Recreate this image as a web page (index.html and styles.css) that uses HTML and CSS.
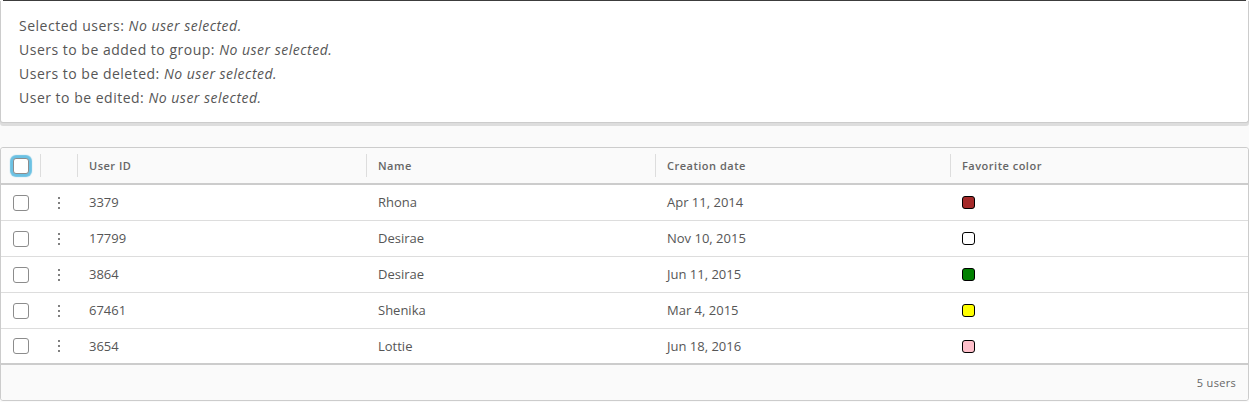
FILE: index.html
```html
<!DOCTYPE html>
<html>
<head>
<meta charset="utf-8">
<link rel="stylesheet" href="styles.css">
</head>
<body>
<div class="topline"></div>
<div class="card">
  <div class="line">Selected users: <em>No user selected.</em></div>
  <div class="line">Users to be added to group: <em>No user selected.</em></div>
  <div class="line">Users to be deleted: <em>No user selected.</em></div>
  <div class="line">User to be edited: <em>No user selected.</em></div>
</div>

<div class="grid">
  <div class="row head">
    <div class="cell c-check"><span class="cb focus"></span></div>
    <div class="cell c-act"><span class="sep"></span></div>
    <div class="cell c-id"><span class="sep"></span>User ID</div>
    <div class="cell c-name"><span class="sep"></span>Name</div>
    <div class="cell c-date"><span class="sep"></span>Creation date</div>
    <div class="cell c-color"><span class="sep"></span>Favorite color</div>
  </div>
  <div class="row">
    <div class="cell c-check"><span class="cb"></span></div>
    <div class="cell c-act"><span class="dots"><i></i><i></i><i></i></span></div>
    <div class="cell c-id"><span class="txt">3379</span></div>
    <div class="cell c-name"><span class="txt">Rhona</span></div>
    <div class="cell c-date"><span class="txt">Apr 11, 2014</span></div>
    <div class="cell c-color"><span class="sw brown"></span></div>
  </div>
  <div class="row">
    <div class="cell c-check"><span class="cb"></span></div>
    <div class="cell c-act"><span class="dots"><i></i><i></i><i></i></span></div>
    <div class="cell c-id"><span class="txt">17799</span></div>
    <div class="cell c-name"><span class="txt">Desirae</span></div>
    <div class="cell c-date"><span class="txt">Nov 10, 2015</span></div>
    <div class="cell c-color"><span class="sw white"></span></div>
  </div>
  <div class="row">
    <div class="cell c-check"><span class="cb"></span></div>
    <div class="cell c-act"><span class="dots"><i></i><i></i><i></i></span></div>
    <div class="cell c-id"><span class="txt">3864</span></div>
    <div class="cell c-name"><span class="txt">Desirae</span></div>
    <div class="cell c-date"><span class="txt">Jun 11, 2015</span></div>
    <div class="cell c-color"><span class="sw green"></span></div>
  </div>
  <div class="row">
    <div class="cell c-check"><span class="cb"></span></div>
    <div class="cell c-act"><span class="dots"><i></i><i></i><i></i></span></div>
    <div class="cell c-id"><span class="txt">67461</span></div>
    <div class="cell c-name"><span class="txt">Shenika</span></div>
    <div class="cell c-date"><span class="txt">Mar 4, 2015</span></div>
    <div class="cell c-color"><span class="sw yellow"></span></div>
  </div>
  <div class="row last">
    <div class="cell c-check"><span class="cb"></span></div>
    <div class="cell c-act"><span class="dots"><i></i><i></i><i></i></span></div>
    <div class="cell c-id"><span class="txt">3654</span></div>
    <div class="cell c-name"><span class="txt">Lottie</span></div>
    <div class="cell c-date"><span class="txt">Jun 18, 2016</span></div>
    <div class="cell c-color"><span class="sw pink"></span></div>
  </div>
  <div class="footer">5 users</div>
</div>
</body>
</html>
```

FILE: styles.css
```css
html, body {
  margin: 0;
  padding: 0;
  background: #fafafa;
  font-family: "Open Sans", "Liberation Sans", sans-serif;
  color: #565656;
}
.topline {
  height: 1px;
  margin: 0 3px;
  background: #3c3c3c;
}
.card {
  background: #fff;
  border: 1px solid #ccc;
  border-top: none;
  border-radius: 0 0 3px 3px;
  box-shadow: 0 3px 0 #ddd;
  padding: 13px 18px 12px 18px;
  font-size: 14px;
  line-height: 24px;
  letter-spacing: 0.5px;
}
.card em {
  font-style: italic;
}
.grid {
  margin-top: 24px;
  border: 1px solid #ccc;
  border-radius: 3px;
  background: #fff;
  height: 252px;
  display: flex;
  flex-direction: column;
}
.row {
  display: flex;
  flex: none;
  height: 35px;
  border-bottom: 1px solid #ddd;
  font-size: 13px;
  letter-spacing: 0;
  color: #565656;
}
.row.head {
  background: #fafafa;
  height: 35px;
  border-bottom: 2px solid #ccc;
  font-size: 11px;
  font-weight: 600;
  color: #666;
  letter-spacing: 0.5px;
  border-radius: 3px 3px 0 0;
}
.row.last {
  height: 34px;
  border-bottom: 2px solid #ccc;
}
.cell {
  position: relative;
  display: flex;
  align-items: center;
  padding: 0 12px;
  box-sizing: border-box;
}
.txt {
  margin-top: -1px;
}
.sep {
  position: absolute;
  left: 0;
  top: 6px;
  bottom: 6px;
  width: 1px;
  background: #ddd;
}
.c-check { width: 39px; padding: 0 0 0 12px; }
.c-act { width: 37px; padding: 0; justify-content: center; }
.c-id { width: 289px; }
.c-name { width: 289px; }
.c-date { width: 295px; }
.c-color { flex: 1; }
.cb {
  width: 14px;
  height: 14px;
  border: 1px solid #8c8c8c;
  border-radius: 3px;
  background: #fff;
}
.cb.focus {
  box-shadow: 0 0 1px 3px #6bc1e3;
}
.dots {
  display: flex;
  flex-direction: column;
  gap: 3px;
  margin-left: 1px;
}
.dots i {
  display: block;
  width: 2px;
  height: 2px;
  background: #565656;
  border-radius: 1px;
}
.sw {
  width: 11px;
  height: 11px;
  border: 1px solid #000;
  border-radius: 3px;
}
.sw.brown { background: #a52a2a; }
.sw.white { background: #fff; }
.sw.green { background: #008000; }
.sw.yellow { background: #ffff00; }
.sw.pink { background: #ffc0cb; }
.footer {
  flex: 1;
  background: #fafafa;
  display: flex;
  align-items: center;
  justify-content: flex-end;
  padding: 0 12px;
  font-size: 11px;
  letter-spacing: 0.3px;
  color: #666;
  border-radius: 0 0 3px 3px;
}
```
